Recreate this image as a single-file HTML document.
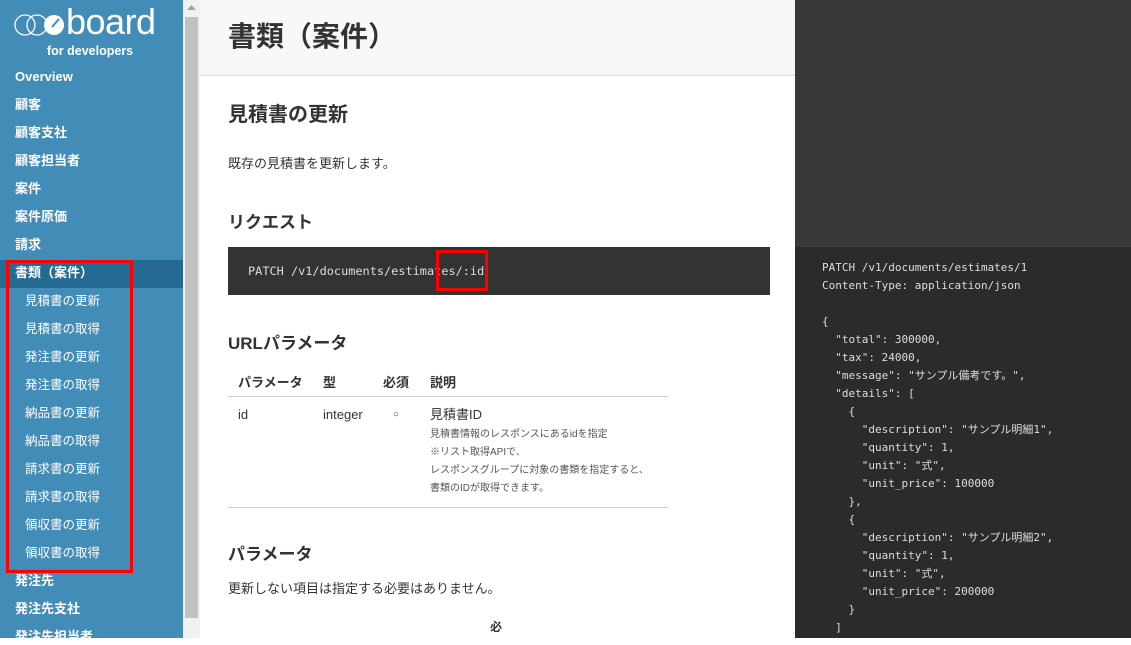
<!DOCTYPE html>
<html><head><meta charset="utf-8"><style>
*{margin:0;padding:0;box-sizing:border-box}
body{width:1131px;height:638px;overflow:hidden;position:relative;background:#fff;font-family:"Liberation Sans","Noto Sans CJK JP",sans-serif;color:#333}
.sb{position:absolute;left:0;top:0;width:183px;height:638px;background:#428cb8;color:#fff}
.sb .it{position:absolute;left:15px;font-size:13px;font-weight:bold;line-height:16px}
.sb .sub{position:absolute;left:25px;font-size:12.5px;line-height:16px}
.act{position:absolute;left:0;top:260px;width:183px;height:28px;background:#256a92}
.scr{position:absolute;left:183px;top:0;width:17px;height:638px;background:#f1f1f1}
.thumb{position:absolute;left:185px;top:17px;width:13px;height:601px;background:#c1c1c1}
.m{position:absolute}
.right1{position:absolute;left:795px;top:0;width:336px;height:247px;background:#393939}
.right2{position:absolute;left:795px;top:247px;width:336px;height:391px;background:#2b2b2b}
.code{position:absolute;left:822px;top:259px;font-family:"DejaVu Sans Mono","Liberation Mono","Noto Sans CJK JP",monospace;font-size:11px;line-height:18px;color:#ddd;white-space:pre}
.red{position:absolute;border:3px solid #f00}
</style></head><body>
<div class="sb">
<svg style="position:absolute;left:14px;top:8px" width="54" height="30" viewBox="0 0 54 30"><g fill="none" stroke="#fff" stroke-width="1.3"><circle cx="11" cy="17" r="10"/><circle cx="23" cy="17" r="10"/></g><circle cx="40" cy="17" r="10" fill="#fff"/><path d="M38 19 L45 11" stroke="#428cb8" stroke-width="2"/></svg>
<div style="position:absolute;left:66px;top:2px;font-size:36px;line-height:40px;font-weight:normal;letter-spacing:-0.5px">board</div>
<div style="position:absolute;left:47px;top:44px;font-size:12.5px;font-weight:bold">for developers</div>
<div class="act"></div>
<div class="it" style="top:69px">Overview</div>
<div class="it" style="top:97px">顧客</div>
<div class="it" style="top:125px">顧客支社</div>
<div class="it" style="top:153px">顧客担当者</div>
<div class="it" style="top:181px">案件</div>
<div class="it" style="top:209px">案件原価</div>
<div class="it" style="top:237px">請求</div>
<div class="it" style="top:265px">書類（案件）</div>
<div class="sub" style="top:293px">見積書の更新</div>
<div class="sub" style="top:321px">見積書の取得</div>
<div class="sub" style="top:349px">発注書の更新</div>
<div class="sub" style="top:377px">発注書の取得</div>
<div class="sub" style="top:405px">納品書の更新</div>
<div class="sub" style="top:433px">納品書の取得</div>
<div class="sub" style="top:461px">請求書の更新</div>
<div class="sub" style="top:489px">請求書の取得</div>
<div class="sub" style="top:517px">領収書の更新</div>
<div class="sub" style="top:545px">領収書の取得</div>
<div class="it" style="top:573px">発注先</div>
<div class="it" style="top:601px">発注先支社</div>
<div class="it" style="top:629px">発注先担当者</div>
</div>
<div class="red" style="left:6px;top:260px;width:127px;height:313px"></div>
<div class="scr"></div><div class="thumb"></div>
<svg style="position:absolute;left:187px;top:4px" width="9" height="6"><path d="M0 6 L4.5 1 L9 6Z" fill="#a3a3a3"/></svg>

<div class="m" style="left:200px;top:0;width:595px;height:76px;background:#f8f8f8;border-bottom:1px solid #ddd"></div>
<div class="m" style="left:228px;top:19px;font-size:28px;font-weight:bold;line-height:36px">書類（案件）</div>
<div class="m" style="left:228px;top:102px;font-size:20px;font-weight:bold;line-height:26px">見積書の更新</div>
<div class="m" style="left:228px;top:155px;font-size:13px;line-height:18px">既存の見積書を更新します。</div>
<div class="m" style="left:228px;top:212px;font-size:17px;font-weight:bold;line-height:22px">リクエスト</div>
<div class="m" style="left:228px;top:247px;width:542px;height:48px;background:#333"></div>
<div class="m" style="left:248px;top:262px;font-family:'DejaVu Sans Mono','Liberation Mono',monospace;font-size:11.9px;line-height:18px;color:#ddd;white-space:pre">PATCH /v1/documents/estimates/:id</div>
<div class="red" style="left:436px;top:250px;width:52px;height:41px"></div>
<div class="m" style="left:228px;top:333px;font-size:17px;font-weight:bold;line-height:22px">URLパラメータ</div>
<div class="m" style="left:238px;top:374px;font-size:13px;font-weight:bold;line-height:18px">パラメータ</div>
<div class="m" style="left:323px;top:374px;font-size:13px;font-weight:bold;line-height:18px">型</div>
<div class="m" style="left:383px;top:374px;font-size:13px;font-weight:bold;line-height:18px">必須</div>
<div class="m" style="left:430px;top:374px;font-size:13px;font-weight:bold;line-height:18px">説明</div>
<div class="m" style="left:228px;top:396px;width:440px;height:1px;background:#ccc"></div>
<div class="m" style="left:238px;top:406px;font-size:13px;line-height:18px">id</div>
<div class="m" style="left:323px;top:406px;font-size:13px;line-height:18px">integer</div>
<div class="m" style="left:393px;top:406px;font-size:10px;line-height:18px">○</div>
<div class="m" style="left:430px;top:406px;font-size:13px;line-height:18px">見積書ID</div>
<div class="m" style="left:430px;top:426px;font-size:10px;line-height:18px;color:#555">見積書情報のレスポンスにあるidを指定<br>※リスト取得APIで、<br>レスポンスグループに対象の書類を指定すると、<br>書類のIDが取得できます。</div>
<div class="m" style="left:228px;top:507px;width:440px;height:1px;background:#ccc"></div>
<div class="m" style="left:228px;top:544px;font-size:17px;font-weight:bold;line-height:22px">パラメータ</div>
<div class="m" style="left:228px;top:580px;font-size:13px;line-height:18px">更新しない項目は指定する必要はありません。</div>
<div class="m" style="left:490px;top:619px;font-size:12px;font-weight:bold;line-height:16px">必</div>

<div class="right1"></div><div class="right2"></div>
<div class="code">PATCH /v1/documents/estimates/1
Content-Type: application/json

{
  "total": 300000,
  "tax": 24000,
  "message": "サンプル備考です。",
  "details": [
    {
      "description": "サンプル明細1",
      "quantity": 1,
      "unit": "式",
      "unit_price": 100000
    },
    {
      "description": "サンプル明細2",
      "quantity": 1,
      "unit": "式",
      "unit_price": 200000
    }
  ]</div>
</body></html>
